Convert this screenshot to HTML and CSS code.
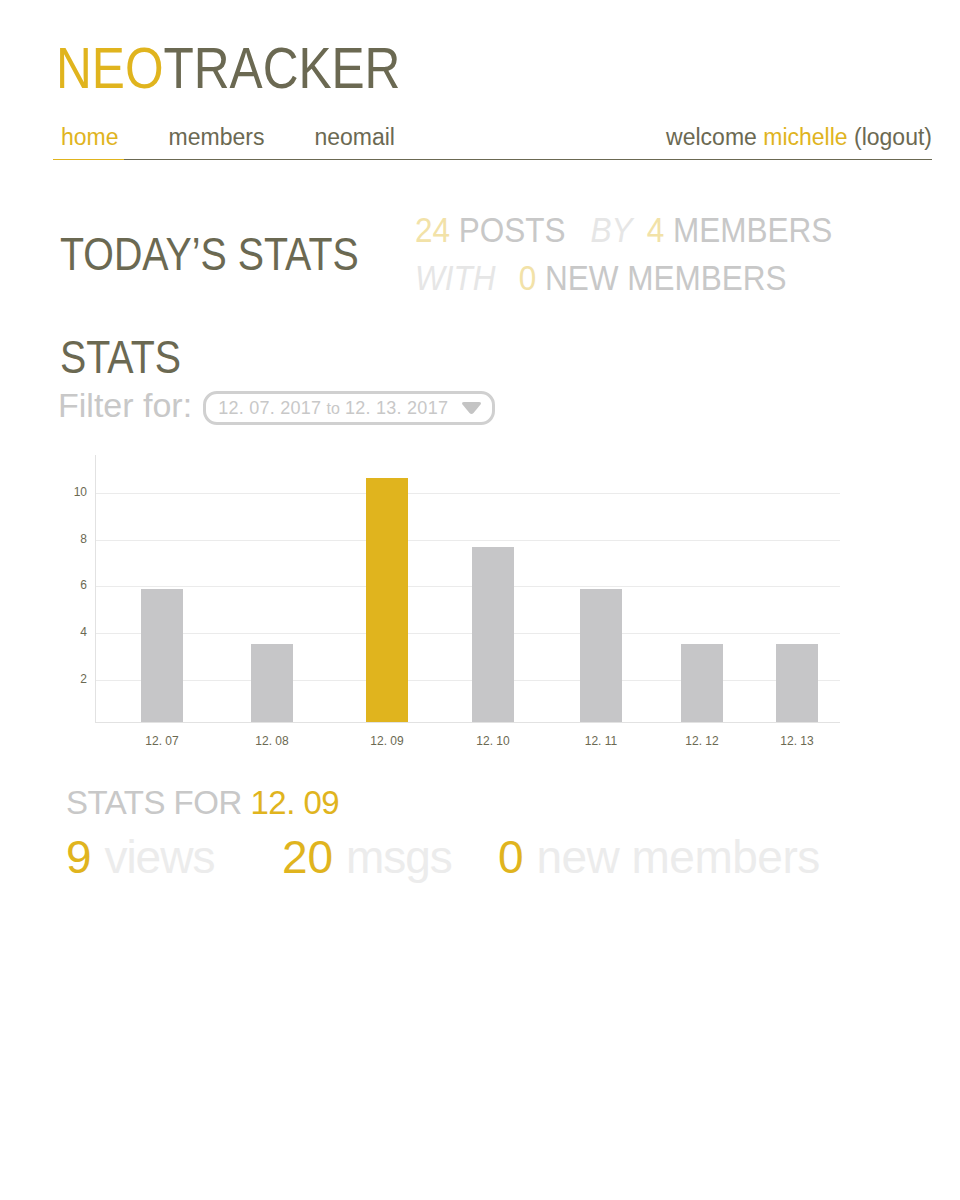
FILE: index.html
```html
<!DOCTYPE html>
<html lang="en">
<head>
<meta charset="utf-8">
<title>NeoTracker</title>
<link rel="stylesheet" href="styles.css">
</head>
<body>
<div class="page">
  <header class="header">
    <h1 class="logo"><span class="narrow"><span class="accent">NEO</span>TRACKER</span></h1>
    <nav class="nav">
      <a class="nav-item active">home</a>
      <a class="nav-item">members</a>
      <a class="nav-item">neomail</a>
      <div class="welcome">welcome <span class="accent">michelle</span> (logout)</div>
    </nav>
  </header>

  <section class="today">
    <h2 class="today-title"><span class="narrow">TODAY’S STATS</span></h2>
    <div class="today-figures">
      <div class="fig-line"><span class="num">24</span> POSTS <span class="conn">BY</span> <span class="num four">4</span> MEMBERS</div>
      <div class="fig-line"><span class="conn">WITH</span> <span class="num">0</span> NEW MEMBERS</div>
    </div>
  </section>

  <section class="stats">
    <h2 class="stats-title"><span class="narrow">STATS</span></h2>
    <div class="filter">
      <span class="filter-label">Filter for:</span>
      <div class="select">
        <span>12. 07. 2017 <span class="to">to</span> 12. 13. 2017</span>
        <svg class="caret" width="21" height="14" viewBox="0 0 21 14"><path d="M3 1 H18 Q21 1 19.5 3.5 L12.5 12 Q10.5 14 8.5 12 L1.5 3.5 Q0 1 3 1 Z" fill="#c4c4c4"/></svg>
      </div>
    </div>

    <div class="chart">
      <svg width="790" height="305" viewBox="0 0 790 305">
        <g stroke="#ebebeb" stroke-width="1">
          <line x1="35" y1="43.5" x2="780" y2="43.5"/>
          <line x1="35" y1="90.5" x2="780" y2="90.5"/>
          <line x1="35" y1="136.5" x2="780" y2="136.5"/>
          <line x1="35" y1="183.5" x2="780" y2="183.5"/>
          <line x1="35" y1="230.5" x2="780" y2="230.5"/>
        </g>
        <g fill="#c6c6c8">
          <rect x="81" y="139" width="42" height="133"/>
          <rect x="191" y="194" width="42" height="78"/>
          <rect x="412" y="97" width="42" height="175"/>
          <rect x="520" y="139" width="42" height="133"/>
          <rect x="621" y="194" width="42" height="78"/>
          <rect x="716" y="194" width="42" height="78"/>
        </g>
        <rect x="306" y="28" width="42" height="244" fill="#e0b41e"/>
        <g stroke="#e2e2e2" stroke-width="1">
          <line x1="35.5" y1="5" x2="35.5" y2="272"/>
          <line x1="35" y1="272.5" x2="780" y2="272.5"/>
        </g>
        <g class="axis-text" text-anchor="end">
          <text x="27" y="46">10</text>
          <text x="27" y="93">8</text>
          <text x="27" y="139">6</text>
          <text x="27" y="186">4</text>
          <text x="27" y="233">2</text>
        </g>
        <g class="axis-text" text-anchor="middle">
          <text x="102" y="295">12. 07</text>
          <text x="212" y="295">12. 08</text>
          <text x="327" y="295">12. 09</text>
          <text x="433" y="295">12. 10</text>
          <text x="541" y="295">12. 11</text>
          <text x="642" y="295">12. 12</text>
          <text x="737" y="295">12. 13</text>
        </g>
      </svg>
    </div>
  </section>

  <section class="day">
    <div class="day-title">STATS FOR <span class="accent">12. 09</span></div>
    <div class="day-figures">
      <div class="day-fig"><span class="accent">9</span> <span class="label">views</span></div>
      <div class="day-fig"><span class="accent">20</span> <span class="label">msgs</span></div>
      <div class="day-fig"><span class="accent">0</span> <span class="label wide">new members</span></div>
    </div>
  </section>
</div>
</body>
</html>
```

FILE: styles.css
```css
* { box-sizing: border-box; }

html, body {
  margin: 0;
  padding: 0;
  background: #ffffff;
}

body {
  font-family: "Liberation Sans", Arial, sans-serif;
  color: #6b6952;
}

.page {
  width: 960px;
  padding: 0 28px 0 53px;
}

.accent { color: #e0b41e; }

.narrow {
  display: inline-block;
  transform: scaleX(0.855);
  transform-origin: left center;
  white-space: nowrap;
}

.header {
  padding-top: 35px;
}

.logo {
  margin: 0 0 0 3px;
  font-weight: normal;
  font-size: 58px;
  line-height: 66px;
  color: #6b6952;
}

.nav {
  display: flex;
  align-items: flex-end;
  margin-top: 23px;
  border-bottom: 1px solid #6b6952;
  font-size: 23px;
  line-height: 26px;
}

.nav-item {
  padding: 0 5px 9px 8px;
  margin-right: 37px;
  color: #6b6952;
  text-decoration: none;
}

.nav-item.active {
  color: #e0b41e;
  border-bottom: 1px solid #e0b41e;
  margin-bottom: -1px;
}

.welcome {
  margin-left: auto;
  padding-bottom: 9px;
}

.today {
  display: flex;
  align-items: center;
  margin-top: 46px;
  padding-left: 7px;
}

.today-title {
  margin: 0;
  flex: 0 0 355px;
  font-weight: normal;
  font-size: 46px;
  line-height: 52px;
  color: #6b6952;
}

.today-figures {
  font-size: 35px;
  line-height: 48px;
  color: #c8c8c8;
  white-space: nowrap;
  transform: scaleX(0.9);
  transform-origin: left center;
}

.today-figures .num { color: #f2e2a8; }
.today-figures .num.four { margin-left: 6px; }
.today-figures .conn { color: #e6e6e6; font-style: italic; margin: 0 0 0 18px; }
.today-figures .fig-line:nth-child(2) .conn { margin-left: 0; margin-right: 16px; }

.stats {
  margin-top: 29px;
  padding-left: 7px;
}

.stats-title {
  margin: 0;
  font-weight: normal;
  font-size: 46px;
  line-height: 52px;
  color: #6b6952;
}

.filter {
  display: flex;
  align-items: flex-start;
  margin-top: 1px;
}

.filter-label {
  font-size: 34px;
  line-height: 42px;
  color: #c8c8c8;
  margin-left: -2px;
}

.select {
  display: flex;
  align-items: center;
  justify-content: space-between;
  width: 292px;
  height: 34px;
  margin-top: 7px;
  margin-left: 11px;
  padding: 0 10px 0 12px;
  border: 3px solid #d0d0d0;
  border-radius: 14px;
  font-size: 18px;
  letter-spacing: 0.25px;
  color: #c8c8c8;
}

.select .to { font-size: 16px; letter-spacing: 0; }

.caret { display: block; }

.chart {
  margin-top: 24px;
}

.chart svg { display: block; }

.axis-text {
  font-family: "Liberation Sans", Arial, sans-serif;
  font-size: 12px;
  fill: #6b6952;
}

.day {
  margin-top: 28px;
  padding-left: 13px;
}

.day-title {
  font-size: 33px;
  line-height: 40px;
  letter-spacing: -0.5px;
  color: #c8c8c8;
}

.day-figures {
  display: flex;
  margin-top: 6px;
}

.day-fig {
  width: 216px;
  font-size: 46px;
  line-height: 56px;
  color: #ececec;
  white-space: nowrap;
}

.day-fig .label { letter-spacing: -1px; }
.day-fig .label.wide { letter-spacing: -0.5px; }
```
